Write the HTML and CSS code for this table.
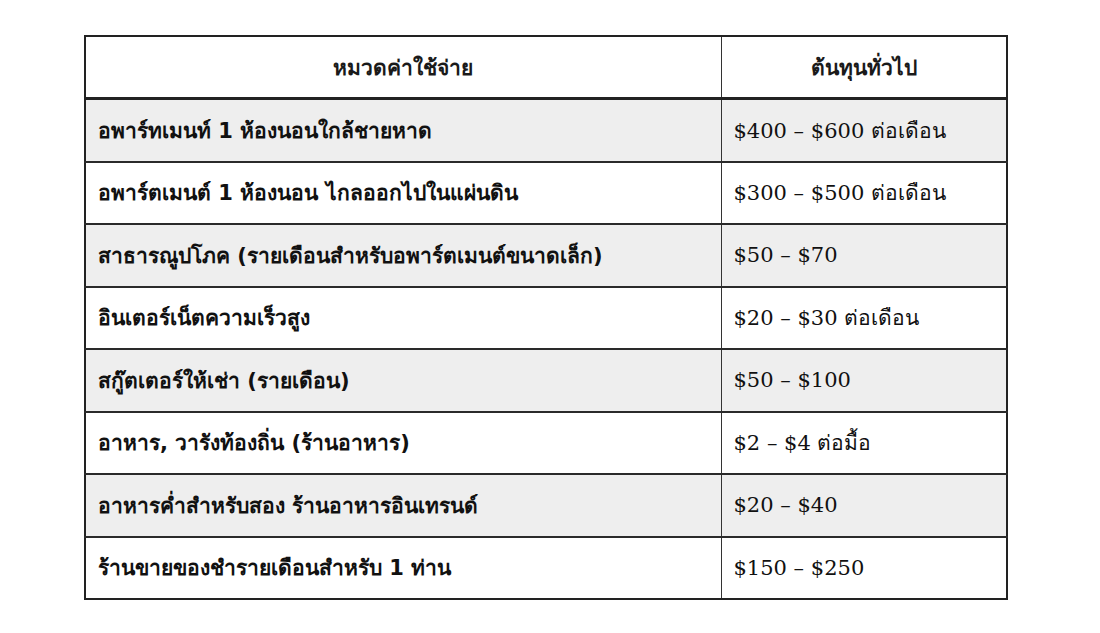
FILE: index.html
```html
<!DOCTYPE html>
<html lang="th">
<head>
<meta charset="utf-8">
<title>ค่าใช้จ่าย</title>
<link rel="stylesheet" href="styles.css">
</head>
<body>
<div class="page">
<table class="costs">
<colgroup><col class="c1"><col class="c2"></colgroup>
<thead>
<tr><th>หมวดค่าใช้จ่าย</th><th>ต้นทุนทั่วไป</th></tr>
</thead>
<tbody>
<tr><td class="cat">อพาร์ทเมนท์ 1 ห้องนอนใกล้ชายหาด</td><td class="cost">$400 – $600 ต่อเดือน</td></tr>
<tr><td class="cat">อพาร์ตเมนต์ 1 ห้องนอน ไกลออกไปในแผ่นดิน</td><td class="cost">$300 – $500 ต่อเดือน</td></tr>
<tr><td class="cat">สาธารณูปโภค (รายเดือนสำหรับอพาร์ตเมนต์ขนาดเล็ก)</td><td class="cost">$50 – $70</td></tr>
<tr><td class="cat">อินเตอร์เน็ตความเร็วสูง</td><td class="cost">$20 – $30 ต่อเดือน</td></tr>
<tr><td class="cat">สกู๊ตเตอร์ให้เช่า (รายเดือน)</td><td class="cost">$50 – $100</td></tr>
<tr><td class="cat">อาหาร, วารังท้องถิ่น (ร้านอาหาร)</td><td class="cost">$2 – $4 ต่อมื้อ</td></tr>
<tr><td class="cat">อาหารค่ำสำหรับสอง ร้านอาหารอินเทรนด์</td><td class="cost">$20 – $40</td></tr>
<tr><td class="cat">ร้านขายของชำรายเดือนสำหรับ 1 ท่าน</td><td class="cost">$150 – $250</td></tr>
</tbody>
</table>
</div>
</body>
</html>
```
FILE: styles.css
```css
html, body {
  margin: 0;
  padding: 0;
  background: #ffffff;
}
.page {
  padding: 35px 0 0 84px;
}
.costs {
  width: 922px;
  border-collapse: collapse;
  border: 2px solid #222222;
  table-layout: fixed;
  color: #111111;
}
.c1 { width: 636px; }
.c2 { width: 286px; }
.costs th {
  height: 60px;
  padding: 0 12px;
  font-family: "Noto Sans", "DejaVu Sans", sans-serif;
  font-weight: 600;
  font-size: 21px;
  text-align: center;
  color: #1a1a1a;
  border-bottom: 3px solid #222222;
  border-right: 1px solid #333333;
}
.costs td {
  height: 60.5px;
  padding: 0 12px;
  border-top: 2px solid #2a2a2a;
  border-right: 1px solid #333333;
  vertical-align: middle;
}
.costs tbody tr:first-child td {
  border-top: 3px solid #222222;
}
.costs tbody tr:nth-child(odd) td {
  background: #eeeeee;
}
.cat {
  font-family: Tahoma, "DejaVu Sans", "Noto Sans", sans-serif;
  font-weight: bold;
  font-size: 21px;
}
.cost {
  font-family: "DejaVu Serif", "Liberation Serif", serif;
  font-size: 21px;
}
```
